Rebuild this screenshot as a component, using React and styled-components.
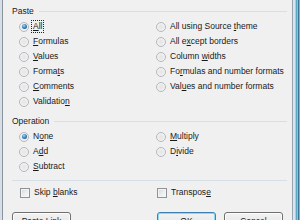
import React from 'react'
import styled, { createGlobalStyle } from 'styled-components'

const Global = createGlobalStyle`
  html, body {
    margin: 0;
    padding: 0;
    background: #f0f0f0;
  }
  body {
    font-family: "Liberation Sans", Arial, sans-serif;
    font-size: 8.5px;
    color: #1a1a1a;
  }
`

const pasteLeft = [
  ['All', 0, true],
  ['Formulas', 0],
  ['Values', 0],
  ['Formats', 5],
  ['Comments', 0],
  ['Validation', 9]
]

const pasteRight = [
  ['All using Source theme', 17],
  ['All except borders', 5],
  ['Column widths', 7],
  ['Formulas and number formats', 2],
  ['Values and number formats', 3]
]

const Mnemonic = ({ text, at }) => (
  <>
    {text.slice(0, at)}
    <U>{text[at]}</U>
    {text.slice(at + 1)}
  </>
)

const Radio = ({ label, at, checked, focused }) => (
  <Row>
    <RadioDot checked={checked} />
    <Label focused={focused}>
      <Mnemonic text={label} at={at} />
    </Label>
  </Row>
)

const Check = ({ label, at }) => (
  <Row>
    <CheckBox />
    <Label>
      <Mnemonic text={label} at={at} />
    </Label>
  </Row>
)

const Group = ({ title, spaced, children }) => (
  <GroupWrap spaced={spaced}>
    <Header>
      <HeaderText>{title}</HeaderText>
      <Rule />
    </Header>
    {children}
  </GroupWrap>
)

export default function App () {
  return (
    <Window>
      <Global />
      <LeftFrame />
      <Body>
        <Group title='Paste'>
          <Columns>
            <Column>
              {pasteLeft.map(([l, at, sel]) => (
                <Radio key={l} label={l} at={at} checked={sel} focused={sel} />
              ))}
            </Column>
            <Column>
              {pasteRight.map(([l, at]) => (
                <Radio key={l} label={l} at={at} />
              ))}
            </Column>
          </Columns>
        </Group>
        <Group title='Operation' spaced>
          <Columns>
            <Column>
              <Radio label='None' at={1} checked />
              <Radio label='Add' at={1} />
              <Radio label='Subtract' at={0} />
            </Column>
            <Column>
              <Radio label='Multiply' at={0} />
              <Radio label='Divide' at={1} />
            </Column>
          </Columns>
        </Group>
        <Separator />
        <Columns>
          <Column>
            <Check label='Skip blanks' at={5} />
          </Column>
          <Column>
            <Check label='Transpose' at={8} />
          </Column>
        </Columns>
        <Buttons>
          <Button><span>Paste <U>L</U>ink</span></Button>
          <ButtonPair>
            <Button primary>OK</Button>
            <Button>Cancel</Button>
          </ButtonPair>
        </Buttons>
      </Body>
      <RightFrame />
    </Window>
  )
}

const Window = styled.div`
  display: flex;
  width: 300px;
  height: 220px;
  overflow: hidden;
  background: #f0f0f0;
`

const LeftFrame = styled.div`
  width: 3px;
  flex: none;
  background: linear-gradient(to right, #d6dfe8 0, #d6dfe8 2px, #8c959d 2px);
`

const RightFrame = styled.div`
  width: 8px;
  flex: none;
  background: linear-gradient(to right,
    #9aa4ad 0, #9aa4ad 1px,
    #d8e6ef 1px, #d8e6ef 3px,
    #a9cde0 3px, #a9cde0 4px,
    #5aa6c8 4px, #5aa6c8 5px,
    #8cc3de 5px, #8cc3de 6px,
    #3f7393 6px, #3f7393 7px,
    #a0a8b0 7px);
`

const Body = styled.div`
  flex: 1;
  min-width: 0;
  padding: 3px 5px 0 9px;
`

const GroupWrap = styled.div`
  margin-top: ${p => (p.spaced ? '4px' : '0')};
`

const Header = styled.div`
  display: flex;
  align-items: center;
  height: 16px;
  gap: 5px;
`

const HeaderText = styled.span`
  line-height: 16px;
`

const Rule = styled.div`
  flex: 1;
  height: 1px;
  background: #d5dfe5;
`

const Separator = styled.div`
  height: 1px;
  background: #d5dfe5;
  margin: 6px 0 4px;
`

const Columns = styled.div`
  display: grid;
  grid-template-columns: 137px 1fr;
  padding-left: 7px;
`

const Column = styled.div`
  display: flex;
  flex-direction: column;
`

const Row = styled.div`
  display: flex;
  align-items: center;
  flex: none;
  height: 15px;
  gap: 2px;
  white-space: nowrap;
`

const RadioDot = styled.span`
  position: relative;
  box-sizing: border-box;
  width: 10px;
  height: 10px;
  flex: none;
  border-radius: 50%;
  border: 1px solid #b4b8bc;
  background: radial-gradient(circle at 50% 50%, #e4e4e4 0, #ececec 45%, #fbfbfb 100%);
  &::after {
    content: "";
    display: ${p => (p.checked ? 'block' : 'none')};
    position: absolute;
    left: 1.5px;
    top: 1.5px;
    width: 5px;
    height: 5px;
    border-radius: 50%;
    background: radial-gradient(circle at 40% 35%, #a8dcf6 0, #3c86bd 45%, #1c4f7e 100%);
  }
`

const CheckBox = styled.span`
  box-sizing: border-box;
  width: 10px;
  height: 10px;
  flex: none;
  margin-left: 1px;
  border: 1px solid #8f9397;
  background: linear-gradient(135deg, #d2d6da 0, #eceeef 55%, #fafafa 100%);
  box-shadow: inset 0 0 0 1px #f4f4f4;
`

const Label = styled.span`
  padding: 0 1px;
  line-height: 11px;
  border: 1px dotted ${p => (p.focused ? '#222' : 'transparent')};
`

const U = styled.u`
  text-decoration: underline;
  text-underline-offset: 1px;
`

const Buttons = styled.div`
  display: flex;
  justify-content: space-between;
  margin-top: 12px;
  padding-right: 4px;
`

const ButtonPair = styled.div`
  display: flex;
  gap: 8px;
`

const Button = styled.div`
  box-sizing: border-box;
  width: 59px;
  height: 17px;
  flex: none;
  display: flex;
  align-items: center;
  justify-content: center;
  border-radius: 3px;
  border: 1px solid ${p => (p.primary ? '#3c7fb1' : '#707070')};
  background: linear-gradient(#f2f2f2 0, #ebebeb 50%, #dddddd 50%, #cfcfcf 100%);
  box-shadow: inset 0 0 0 1px ${p => (p.primary ? '#8fd7f7' : '#fcfcfc')};
  color: #1a1a1a;
`
